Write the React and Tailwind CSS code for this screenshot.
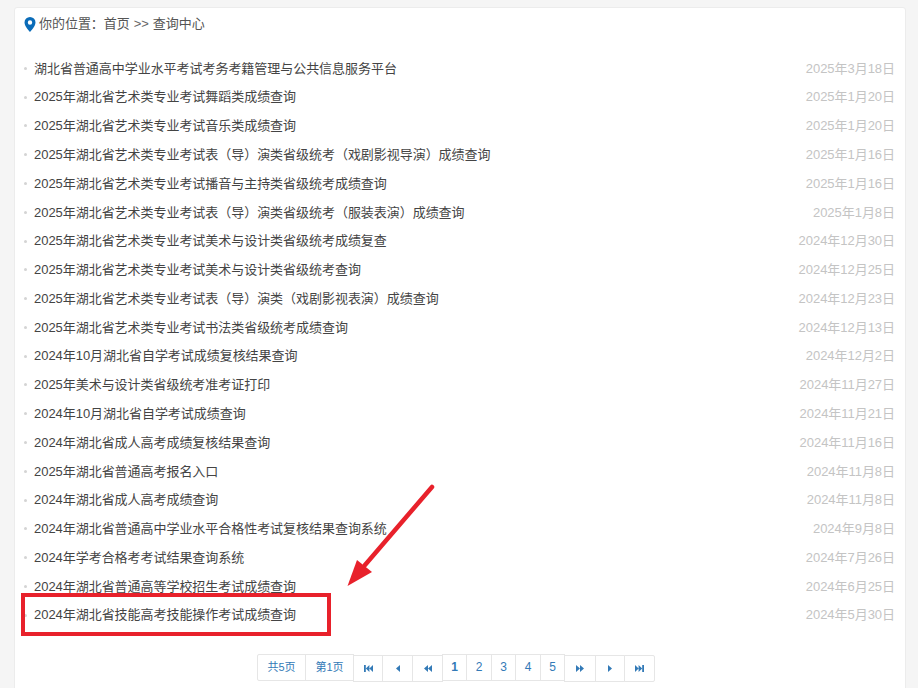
const rows = [
  ["湖北省普通高中学业水平考试考务考籍管理与公共信息服务平台", "2025年3月18日"],
  ["2025年湖北省艺术类专业考试舞蹈类成绩查询", "2025年1月20日"],
  ["2025年湖北省艺术类专业考试音乐类成绩查询", "2025年1月20日"],
  ["2025年湖北省艺术类专业考试表（导）演类省级统考（戏剧影视导演）成绩查询", "2025年1月16日"],
  ["2025年湖北省艺术类专业考试播音与主持类省级统考成绩查询", "2025年1月16日"],
  ["2025年湖北省艺术类专业考试表（导）演类省级统考（服装表演）成绩查询", "2025年1月8日"],
  ["2025年湖北省艺术类专业考试美术与设计类省级统考成绩复查", "2024年12月30日"],
  ["2025年湖北省艺术类专业考试美术与设计类省级统考查询", "2024年12月25日"],
  ["2025年湖北省艺术类专业考试表（导）演类（戏剧影视表演）成绩查询", "2024年12月23日"],
  ["2025年湖北省艺术类专业考试书法类省级统考成绩查询", "2024年12月13日"],
  ["2024年10月湖北省自学考试成绩复核结果查询", "2024年12月2日"],
  ["2025年美术与设计类省级统考准考证打印", "2024年11月27日"],
  ["2024年10月湖北省自学考试成绩查询", "2024年11月21日"],
  ["2024年湖北省成人高考成绩复核结果查询", "2024年11月16日"],
  ["2025年湖北省普通高考报名入口", "2024年11月8日"],
  ["2024年湖北省成人高考成绩查询", "2024年11月8日"],
  ["2024年湖北省普通高中学业水平合格性考试复核结果查询系统", "2024年9月8日"],
  ["2024年学考合格考考试结果查询系统", "2024年7月26日"],
  ["2024年湖北省普通高等学校招生考试成绩查询", "2024年6月25日"],
  ["2024年湖北省技能高考技能操作考试成绩查询", "2024年5月30日"],
];

const Tri = ({ d, w = 10, vw = 10 }) => (
  <svg width={w} height="7" viewBox={`0 0 ${vw} 8`} preserveAspectRatio="none" fill="#337ab7"><path d={d} /></svg>
);

const pageCell = "flex h-[27px] items-center justify-center border border-[#e6e6e6] -ml-px bg-white text-[#337ab7]";

export default function App() {
  return (
    <div className="relative h-[688px] w-[918px] overflow-hidden bg-[#f5f5f5] font-['Liberation_Sans','Noto_Sans_CJK_SC',sans-serif] text-[13px] tracking-[-0.04px]">
      <div className="ml-[14px] mt-[7px] w-[892px] rounded-[3px] border border-[#ececec] bg-white pl-[9px] pr-[10px] pt-[7px]">
        <div className="flex h-[18px] items-center text-[#555]">
          <svg width="12" height="15" viewBox="0 0 12 15" className="mr-[3px]">
            <path fillRule="evenodd" fill="#0b6cb8" d="M6 0a5.500 5.500 0 0 0-5.500 5.500C.5 9.400 6 15 6 15s5.500-5.600 5.500-9.500A5.500 5.500 0 0 0 6 0zm0 3.300a2.200 2.200 0 1 1 0 4.400 2.200 2.200 0 0 1 0-4.400z" />
          </svg>
          <span>你的位置：</span>
          <span>首页</span>
          <span className="mx-[4px] text-[#666]">&gt;&gt;</span>
          <span>查询中心</span>
        </div>
        <ul className="mt-[21px]">
          {rows.map(([t, d]) => (
            <li key={t} className="flex h-[28.79px] items-center justify-between">
              <div className="flex items-center text-[#444]">
                <span className="mr-[7px] h-[3px] w-[3px] rounded-full bg-[#d4d4d4]" />
                <span>{t}</span>
              </div>
              <span className="text-[#c4c4c4]">{d}</span>
            </li>
          ))}
        </ul>
        <div className="mt-[24px] flex h-[60px] justify-center pr-[7px] text-[11px]">
          <div className="flex h-[27px] pl-px">
            <div className={`${pageCell} w-[49px] rounded-l-[2px]`}>共5页</div>
            <div className={`${pageCell} w-[49px]`}>第1页</div>
            <div className={`${pageCell} w-[30px] mt-px`}><Tri w={9} vw={10} d="M0 0h2v8H0zM6 0v8L2 4zM10 0v8L6 4z" /></div>
            <div className={`${pageCell} w-[31px] mt-px`}><Tri w={4} vw={5} d="M5 0v8L0 4z" /></div>
            <div className={`${pageCell} w-[31px] mt-px`}><Tri w={8} vw={8} d="M4 0v8L0 4zM8 0v8L4 4z" /></div>
            <div className={`${pageCell} w-[25px] text-[12px] font-bold`}>1</div>
            <div className={`${pageCell} w-[26px] text-[12px]`}>2</div>
            <div className={`${pageCell} w-[25px] text-[12px]`}>3</div>
            <div className={`${pageCell} w-[26px] text-[12px]`}>4</div>
            <div className={`${pageCell} w-[25px] text-[12px]`}>5</div>
            <div className={`${pageCell} w-[32px] mt-px`}><Tri w={8} vw={8} d="M0 0v8l4-4zM4 0v8l4-4z" /></div>
            <div className={`${pageCell} w-[30px] mt-px`}><Tri w={4} vw={5} d="M0 0v8l5-4z" /></div>
            <div className={`${pageCell} w-[31px] mt-px rounded-r-[2px]`}><Tri w={9} vw={10} d="M0 0v8l4-4zM4 0v8l4-4zM8 0h2v8H8z" /></div>
          </div>
        </div>
      </div>

      <div className="absolute left-[21px] top-[593px] h-[43px] w-[310px] border-[4px] border-[#e8212b]" />
      <svg className="absolute left-[340px] top-[480px]" width="100" height="112" viewBox="0 0 100 112">
        <path d="M92 7 L25 85" stroke="#e8212b" strokeWidth="4.500" strokeLinecap="round" fill="none" />
        <path d="M7.500 106 L17 80 L32 92 Z" fill="#e8212b" />
      </svg>
    </div>
  );
}
